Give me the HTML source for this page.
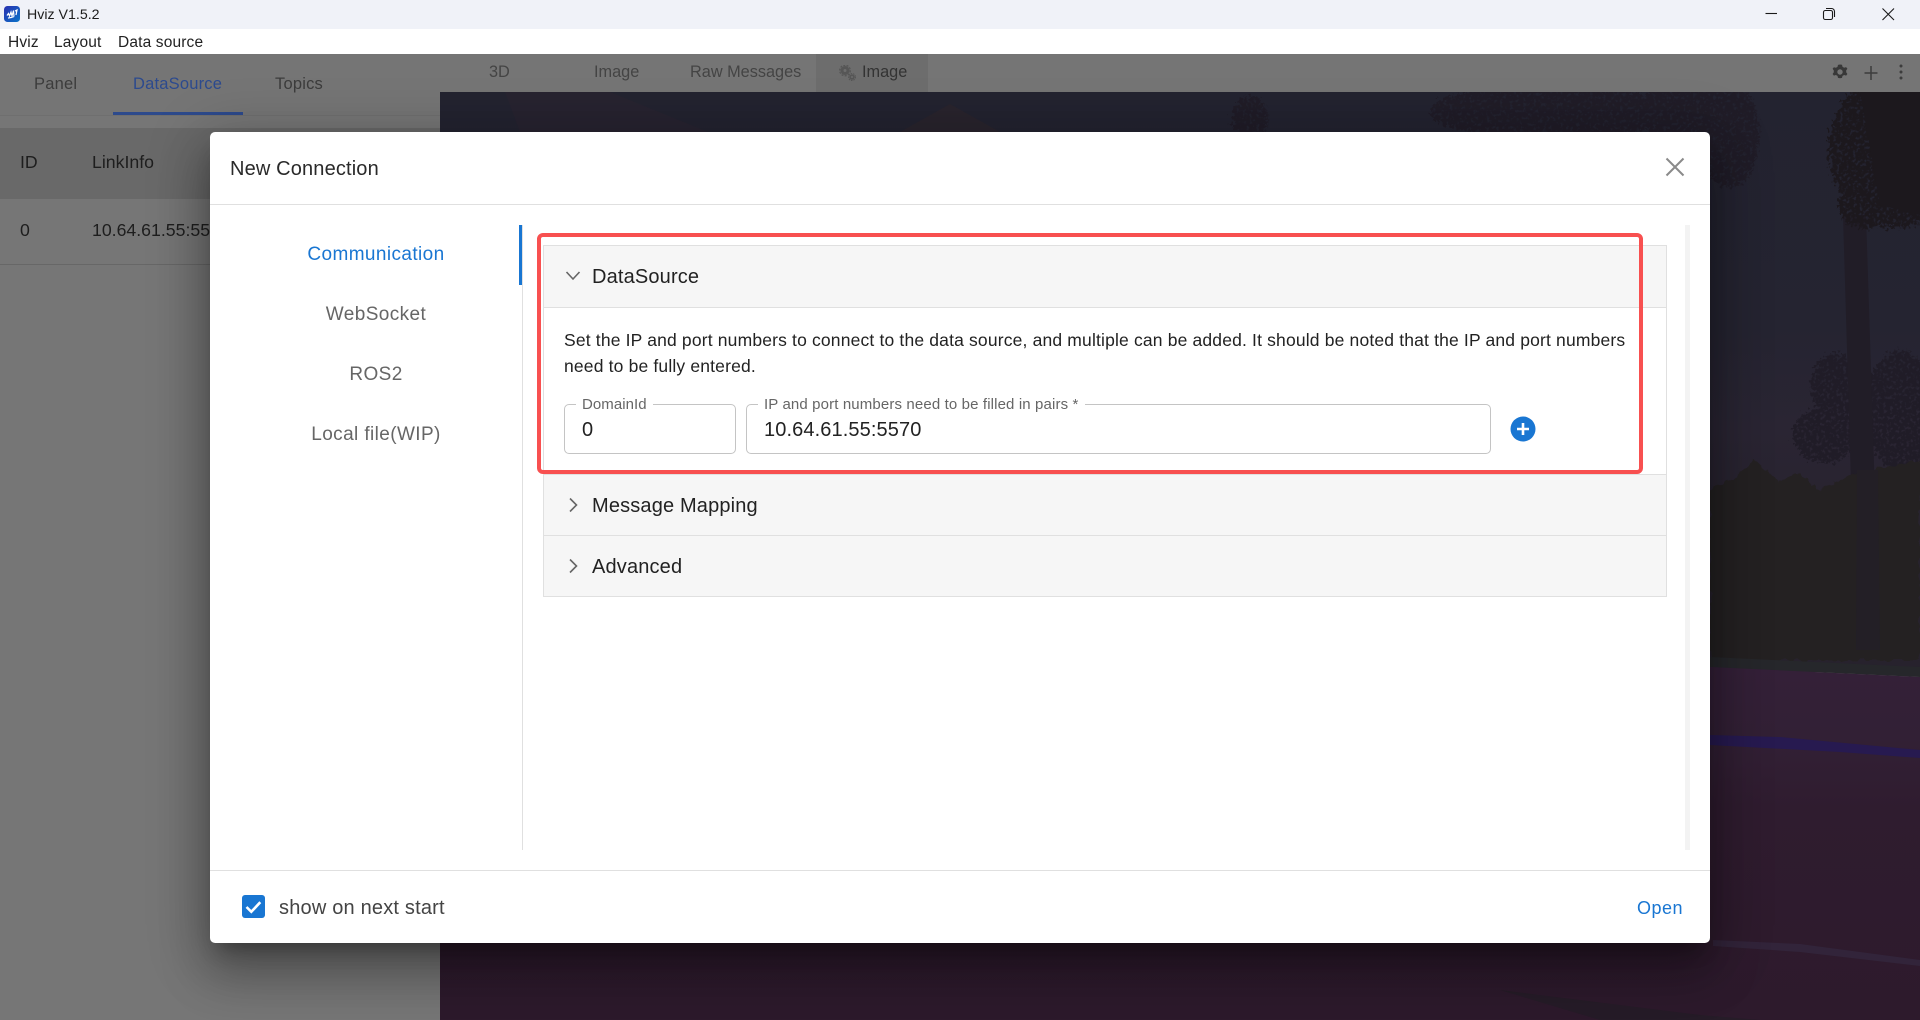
<!DOCTYPE html>
<html lang="en">
<head>
<meta charset="utf-8">
<title>Hviz V1.5.2</title>
<style>
html,body{margin:0;padding:0;width:1920px;height:1020px;overflow:hidden;background:#fff}
body{position:relative;font-family:"Liberation Sans",Arial,sans-serif;color:rgba(0,0,0,.87)}
.a{position:absolute}
.t{position:absolute;white-space:nowrap;line-height:24px}
</style>
</head>
<body>
<!-- title bar -->
<div class="a" style="left:0;top:0;width:1920px;height:29px;background:#f0f2f8"></div>
<svg class="a" style="left:4px;top:6px" width="16" height="17" viewBox="0 0 16 17">
<defs><linearGradient id="lg" x1="0" y1="0" x2="1" y2="1"><stop offset="0" stop-color="#2a2fb0"/><stop offset="1" stop-color="#0a74c8"/></linearGradient></defs>
<rect width="16" height="16" rx="3.5" fill="url(#lg)"/>
<path d="M3 9.500l1.500-2 1 2.500 1.500-4 1 4 1.500-5.500.500 6M4 12l3-.5 3-1M11 5l2-1-1 5" fill="none" stroke="#fff" stroke-width="1.2"/>
</svg>
<div class="t" style="left:27px;top:3px;font-size:14.2px;color:#1c1c1c">Hviz V1.5.2</div>
<svg class="a" style="left:1760px;top:0" width="160" height="29" viewBox="0 0 160 29" fill="none" stroke="#1a1a1a" stroke-width="1.1">
<path d="M5.500 13.500H17"/>
<rect x="63.500" y="10.500" width="9" height="9" rx="1.800"/>
<path d="M66 8.500h5.500a3 3 0 0 1 3 3v5.500"/>
<path d="M122.500 8.500l11.500 11.500M134 8.500L122.500 20"/>
</svg>
<!-- menu -->
<div class="t" style="left:8px;top:31px;font-size:15.5px;letter-spacing:.15px;color:#222">Hviz</div>
<div class="t" style="left:54px;top:31px;font-size:15.5px;letter-spacing:.15px;color:#222">Layout</div>
<div class="t" style="left:118px;top:31px;font-size:15.5px;letter-spacing:.15px;color:#222">Data source</div>

<!-- dimmed app -->
<div class="a" style="left:0;top:54px;width:1920px;height:966px;background:#767676;overflow:hidden">
  <div class="a" style="left:440px;top:0;width:1480px;height:38px;background:#757575;border-bottom:1px solid #6f6f6f"></div>
  <div class="a" style="left:816px;top:0;width:112px;height:38px;background:#6d6d6d"></div>
  <div class="a" style="left:0;top:0;width:440px;height:61px;background:#757575;border-bottom:1px solid #6f6f6f"></div>
  <div class="a" style="left:113px;top:58px;width:130px;height:3px;background:#2d4a8c"></div>
  <div class="a" style="left:0;top:74px;width:440px;height:71px;background:#696969"></div>
  <div class="a" style="left:0;top:210px;width:440px;height:1px;background:#676767"></div>

  <div class="t" style="left:34px;top:18px;font-size:16.5px;letter-spacing:.2px;color:#3c3c3c">Panel</div>
  <div class="t" style="left:133px;top:18px;font-size:16.5px;letter-spacing:.2px;color:#2c4a8e">DataSource</div>
  <div class="t" style="left:275px;top:18px;font-size:16.5px;letter-spacing:.2px;color:#3c3c3c">Topics</div>
  <div class="t" style="left:489px;top:6px;font-size:16.3px;color:#444">3D</div>
  <div class="t" style="left:594px;top:6px;font-size:16.3px;color:#444">Image</div>
  <div class="t" style="left:690px;top:6px;font-size:16.3px;color:#444">Raw Messages</div>
  <div class="t" style="left:862px;top:6px;font-size:16.3px;color:#333">Image</div>
  <svg class="a" style="left:838px;top:11px" width="20" height="18" viewBox="0 0 20 18">
    <circle cx="7" cy="5.500" r="4.500" fill="#565656"/>
    <circle cx="7" cy="5.500" r="5.300" fill="none" stroke="#565656" stroke-width="1.300" stroke-dasharray="2 1.300"/>
    <circle cx="7" cy="5.500" r="1.500" fill="#6d6d6d"/>
    <circle cx="14" cy="12" r="2.800" fill="#565656"/>
    <circle cx="14" cy="12" r="3.500" fill="none" stroke="#565656" stroke-width="1" stroke-dasharray="1.500 1"/>
    <circle cx="14" cy="12" r="1" fill="#6d6d6d"/>
  </svg>
  <div class="t" style="left:20px;top:96px;font-size:17.7px;color:#1e1e1e">ID</div>
  <div class="t" style="left:92px;top:96px;font-size:17.7px;color:#1e1e1e">LinkInfo</div>
  <div class="t" style="left:20px;top:164px;font-size:17.7px;color:#1e1e1e">0</div>
  <div class="t" style="left:92px;top:164px;font-size:17.7px;color:#1e1e1e">10.64.61.55:5570</div>

  <svg class="a" style="left:1830px;top:8px" width="90" height="22" viewBox="0 0 90 22">
    <path d="M10 2.500l2 .3.500 2 1.600.9 2-.6 1.300 1.600-1.200 1.700v1.900l1.200 1.700-1.300 1.600-2-.6-1.600.9-.5 2-2 .3-2-.3-.5-2-1.600-.9-2 .6-1.300-1.600 1.200-1.700V8.500L2.600 6.800l1.300-1.600 2 .6 1.600-.9.500-2z" fill="#383838"/>
    <circle cx="10" cy="10" r="2.700" fill="#757575"/>
    <path d="M41 4v14M34.500 11h13" stroke="#3c3c3c" stroke-width="1.500" fill="none"/>
    <circle cx="71" cy="4" r="1.500" fill="#3c3c3c"/><circle cx="71" cy="10" r="1.500" fill="#3c3c3c"/><circle cx="71" cy="16" r="1.500" fill="#3c3c3c"/>
  </svg>
</div>

<!-- 3D scene -->
<svg class="a" style="left:440px;top:92px" width="1480" height="928" viewBox="440 92 1480 928">
<defs>
<linearGradient id="sky" x1="0" y1="92" x2="0" y2="560" gradientUnits="userSpaceOnUse">
<stop offset="0" stop-color="#232330"/><stop offset=".5" stop-color="#252431"/><stop offset=".72" stop-color="#2a2533"/><stop offset="1" stop-color="#27222d"/>
</linearGradient>
<linearGradient id="gr" x1="0" y1="667" x2="0" y2="1020" gradientUnits="userSpaceOnUse">
<stop offset="0" stop-color="#342038"/><stop offset=".2" stop-color="#322035"/><stop offset=".4" stop-color="#2f1c2f"/><stop offset="1" stop-color="#2d1a2c"/>
</linearGradient>
<filter id="leaf" x="-10%" y="-10%" width="120%" height="120%" color-interpolation-filters="sRGB">
<feTurbulence type="fractalNoise" baseFrequency=".3" numOctaves="2" seed="4" result="n"/>
<feDisplacementMap in="SourceGraphic" in2="n" scale="16" xChannelSelector="R" yChannelSelector="G" result="d"/>
<feColorMatrix in="n" type="matrix" values="0 0 0 0 0 0 0 0 0 0 0 0 0 0 0 5 0 0 0 -1.400" result="m"/>
<feComposite in="d" in2="m" operator="in"/>
</filter>
<filter id="soft" x="-10%" y="-10%" width="120%" height="120%" color-interpolation-filters="sRGB"><feTurbulence type="fractalNoise" baseFrequency=".12" numOctaves="2" seed="7"/><feDisplacementMap in="SourceGraphic" scale="8" xChannelSelector="R" yChannelSelector="G"/></filter>
</defs>
<rect x="440" y="92" width="1480" height="580" fill="url(#sky)"/>
<path d="M505 92L520 132H708L610 92z" fill="#272330"/>
<path d="M900 132L950 104 1000 132z" fill="#29242d"/>
<g filter="url(#leaf)" fill="#201c27">
<ellipse cx="1250" cy="118" rx="18" ry="22"/>
<ellipse cx="1550" cy="112" rx="120" ry="28"/>
<ellipse cx="1690" cy="112" rx="50" ry="36"/>
<ellipse cx="1730" cy="135" rx="30" ry="52"/>
<ellipse cx="1835" cy="385" rx="24" ry="32"/>
<ellipse cx="1825" cy="435" rx="32" ry="28"/>
<ellipse cx="1900" cy="410" rx="34" ry="60"/>
</g>
<path d="M1843 215L1866 215 1880 650 1856 650z" fill="#211d27"/>
<g filter="url(#leaf)" fill="#1c181d">
<ellipse cx="1895" cy="150" rx="66" ry="78"/>
<ellipse cx="1865" cy="205" rx="26" ry="24"/>
</g>
<path d="M1860 92H1920V215L1880 205z" fill="#1c181d"/>
<g filter="url(#soft)" fill="#242122">
<path d="M1710 490L1733 478 1755 460 1777 482 1800 473 1820 490 1850 475 1920 460V660H1710z"/>
</g>
<path d="M1857 470L1878 470 1880 650 1856 650z" fill="#231f26"/>
<path d="M1710 657L1920 667V677L1710 667z" fill="#26272b"/>
<path d="M440 667L1710 667 1920 677V1020H440z" fill="url(#gr)"/>
<path d="M1710 735L1780 737 1920 750V758L1840 752 1710 745z" fill="#271a50"/>
<path d="M1713 940L1800 944 1920 960V966L1800 952 1713 946z" fill="#32243a"/>
<path d="M1500 990L1700 1015 1760 1020H1600z" fill="#261c28"/>
</svg>

<!-- dialog -->
<div class="a" style="left:210px;top:132px;width:1500px;height:811px;background:#fff;border-radius:5px;box-shadow:0 14px 19px -9px rgba(0,0,0,.3),0 30px 47px 4px rgba(0,0,0,.22),0 11px 57px 10px rgba(0,0,0,.2)"></div>
<div class="a" style="left:210px;top:204px;width:1500px;height:1px;background:#e0e0e0"></div>
<div class="a" style="left:210px;top:870px;width:1500px;height:1px;background:#e0e0e0"></div>
<div class="t" style="left:230px;top:157px;font-size:20px;letter-spacing:.15px;color:#2a2a2a">New Connection</div>
<svg class="a" style="left:1665px;top:157px" width="20" height="20" viewBox="0 0 20 20"><path d="M1.500 1.500L18.500 18.500M18.500 1.500L1.500 18.500" stroke="#8a8a8a" stroke-width="2" fill="none"/></svg>

<!-- vertical tabs -->
<div class="a" style="left:522px;top:225px;width:1px;height:625px;background:#e0e0e0"></div>
<div class="a" style="left:519px;top:225px;width:3px;height:60px;background:#1976d2"></div>
<div class="t" style="left:221px;width:310px;text-align:center;top:243px;font-size:19px;letter-spacing:.4px;color:#1976d2">Communication</div>
<div class="t" style="left:221px;width:310px;text-align:center;top:303px;font-size:19px;letter-spacing:.4px;color:#666">WebSocket</div>
<div class="t" style="left:221px;width:310px;text-align:center;top:363px;font-size:19px;letter-spacing:.4px;color:#666">ROS2</div>
<div class="t" style="left:221px;width:310px;text-align:center;top:423px;font-size:19px;letter-spacing:.4px;color:#666">Local file(WIP)</div>
<div class="a" style="left:1685px;top:225px;width:5px;height:625px;background:#f3f3f3"></div>

<!-- accordion -->
<div class="a" style="left:543px;top:245px;width:1122px;height:61px;background:#f6f6f6;border:1px solid #e0e0e0"></div>
<div class="a" style="left:543px;top:308px;width:1122px;height:166px;background:#fff;border-left:1px solid #e0e0e0;border-right:1px solid #e0e0e0"></div>
<div class="a" style="left:543px;top:474px;width:1122px;height:60px;background:#f6f6f6;border:1px solid #e0e0e0"></div>
<div class="a" style="left:543px;top:536px;width:1122px;height:60px;background:#f6f6f6;border:1px solid #e0e0e0;border-top:0"></div>
<svg class="a" style="left:563px;top:268px" width="20" height="16" viewBox="0 0 20 16"><path d="M3.500 4l6.500 7 6.500-7" fill="none" stroke="#666" stroke-width="1.600"/></svg>
<svg class="a" style="left:565px;top:495px" width="16" height="20" viewBox="0 0 16 20"><path d="M5 3.500l6.500 6.500-6.500 6.500" fill="none" stroke="#666" stroke-width="1.600"/></svg>
<svg class="a" style="left:565px;top:556px" width="16" height="20" viewBox="0 0 16 20"><path d="M5 3.500l6.500 6.500-6.500 6.500" fill="none" stroke="#666" stroke-width="1.600"/></svg>
<div class="t" style="left:592px;top:265px;font-size:20px;letter-spacing:.16px;color:#222">DataSource</div>
<div class="t" style="left:592px;top:494px;font-size:20px;letter-spacing:.16px;color:#222">Message Mapping</div>
<div class="t" style="left:592px;top:555px;font-size:20px;letter-spacing:.16px;color:#222">Advanced</div>
<div class="t" style="left:564px;top:328px;font-size:17.500px;letter-spacing:.165px;color:#222">Set the IP and port numbers to connect to the data source, and multiple can be added. It should be noted that the IP and port numbers</div>
<div class="t" style="left:564px;top:354px;font-size:17.500px;letter-spacing:.165px;color:#222">need to be fully entered.</div>

<!-- inputs -->
<div class="a" style="left:564px;top:404px;width:170px;height:48px;border:1px solid #c4c4c4;border-radius:5px"></div>
<div class="a" style="left:746px;top:404px;width:743px;height:48px;border:1px solid #c4c4c4;border-radius:5px"></div>
<div class="t" style="left:576px;top:393px;padding:0 6px;background:#fff;font-size:15px;letter-spacing:.05px;color:#666;line-height:20px;margin-top:2px">DomainId</div>
<div class="t" style="left:758px;top:393px;padding:0 6px;background:#fff;font-size:15px;letter-spacing:.13px;color:#666;line-height:20px;margin-top:2px">IP and port numbers need to be filled in pairs *</div>
<div class="t" style="left:582px;top:418px;font-size:20px;color:#222">0</div>
<div class="t" style="left:764px;top:418px;font-size:20px;letter-spacing:.11px;color:#222">10.64.61.55:5570</div>
<svg class="a" style="left:1510px;top:416px" width="26" height="26" viewBox="0 0 26 26"><circle cx="13" cy="13" r="12.500" fill="#1976d2"/><path d="M13 7v12M7 13h12" stroke="#fff" stroke-width="2.600"/></svg>

<!-- red annotation -->
<div class="a" style="left:537px;top:233px;width:1098px;height:233px;border:4px solid #f85050;border-radius:6px"></div>

<!-- footer -->
<svg class="a" style="left:242px;top:895px" width="23" height="23" viewBox="0 0 23 23"><rect width="23" height="23" rx="3" fill="#1976d2"/><path d="M4.500 12l4.800 4.800 9-9.600" fill="none" stroke="#fff" stroke-width="2.600"/></svg>
<div class="t" style="left:279px;top:896px;font-size:20px;letter-spacing:.19px;color:#444">show on next start</div>
<div class="t" style="left:1637px;top:896px;font-size:18px;letter-spacing:.5px;color:#1976d2">Open</div>
</body>
</html>
